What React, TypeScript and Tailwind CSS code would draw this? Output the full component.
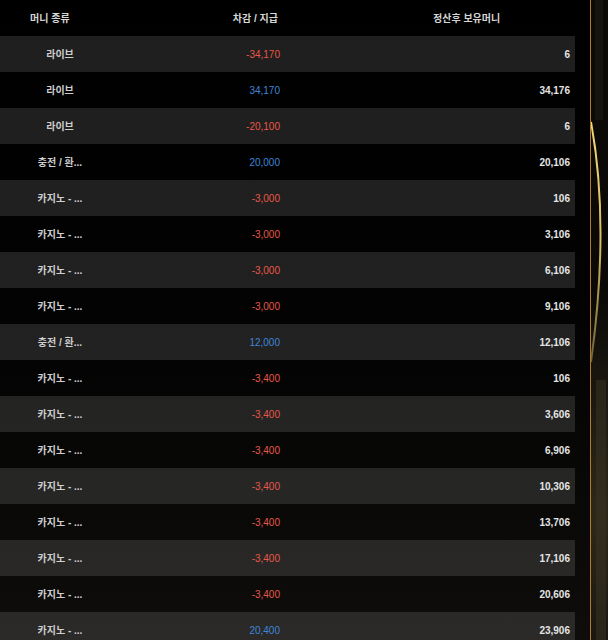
import React from "react";

type Row = { kind: string; delta: string; balance: string };

const rows: Row[] = [
  { kind: "라이브", delta: "-34,170", balance: "6" },
  { kind: "라이브", delta: "34,170", balance: "34,176" },
  { kind: "라이브", delta: "-20,100", balance: "6" },
  { kind: "충전 / 환...", delta: "20,000", balance: "20,106" },
  { kind: "카지노 - ...", delta: "-3,000", balance: "106" },
  { kind: "카지노 - ...", delta: "-3,000", balance: "3,106" },
  { kind: "카지노 - ...", delta: "-3,000", balance: "6,106" },
  { kind: "카지노 - ...", delta: "-3,000", balance: "9,106" },
  { kind: "충전 / 환...", delta: "12,000", balance: "12,106" },
  { kind: "카지노 - ...", delta: "-3,400", balance: "106" },
  { kind: "카지노 - ...", delta: "-3,400", balance: "3,606" },
  { kind: "카지노 - ...", delta: "-3,400", balance: "6,906" },
  { kind: "카지노 - ...", delta: "-3,400", balance: "10,306" },
  { kind: "카지노 - ...", delta: "-3,400", balance: "13,706" },
  { kind: "카지노 - ...", delta: "-3,400", balance: "17,106" },
  { kind: "카지노 - ...", delta: "-3,400", balance: "20,606" },
  { kind: "카지노 - ...", delta: "20,400", balance: "23,906" },
];

const font = { fontFamily: '"Liberation Sans", "Noto Sans CJK KR", sans-serif' };

function Decoration() {
  return (
    <svg width="17" height="640" viewBox="0 0 17 640" className="block">
      <defs>
        <linearGradient id="bg" x1="0" y1="0" x2="0" y2="1">
          <stop offset="0" stopColor="#0d0b08" />
          <stop offset="0.45" stopColor="#0a0907" />
          <stop offset="0.8" stopColor="#2c2819" />
          <stop offset="1" stopColor="#1a1711" />
        </linearGradient>
        <linearGradient id="arc" x1="0" y1="0" x2="0" y2="1">
          <stop offset="0" stopColor="#f3d874" />
          <stop offset="0.5" stopColor="#d8bd62" />
          <stop offset="1" stopColor="#6b5f3a" />
        </linearGradient>
      </defs>
      <rect width="17" height="640" fill="url(#bg)" />
      <rect x="4" y="0" width="8" height="120" fill="#1d1a14" opacity="0.6" />
      <rect x="5" y="380" width="10" height="260" fill="#3a3424" opacity="0.5" />
      <path d="M0 122 Q 19 225 0 362" stroke="url(#arc)" strokeWidth="2" fill="none" />
    </svg>
  );
}

export default function App() {
  return (
    <div className="flex w-[608px] h-[640px] overflow-hidden bg-black" style={font}>
      <div className="w-[591px] shrink-0 border-r border-[#b5792c] bg-[linear-gradient(180deg,#000000_0%,#030303_50%,#0e0d0b_100%)] pr-[15px]">
        <div className="grid grid-cols-[120px_170px_1fr] h-[36px] items-center text-[10px] font-bold text-[#d6d6d6]">
          <div className="pl-[30px]">머니 종류</div>
          <div className="text-right pr-[12px]">차감 / 지급</div>
          <div className="pl-[143px]">정산후 보유머니</div>
        </div>
        {rows.map((r, i) => (
          <div
            key={i}
            className={
              "grid grid-cols-[120px_170px_1fr] h-[36px] items-center text-[10px] " +
              (i % 2 === 0 ? "bg-white/[0.12]" : "bg-transparent")
            }
          >
            <div className="text-center font-bold text-[#cfcfcf]">{r.kind}</div>
            <div
              className={
                "text-right pr-[10px] " +
                (r.delta.startsWith("-") ? "text-[#e8574a]" : "text-[#3f86d8]")
              }
            >
              {r.delta}
            </div>
            <div className="text-right pr-[5px] font-bold text-[#e4e4e4]">{r.balance}</div>
          </div>
        ))}
      </div>
      <Decoration />
    </div>
  );
}
